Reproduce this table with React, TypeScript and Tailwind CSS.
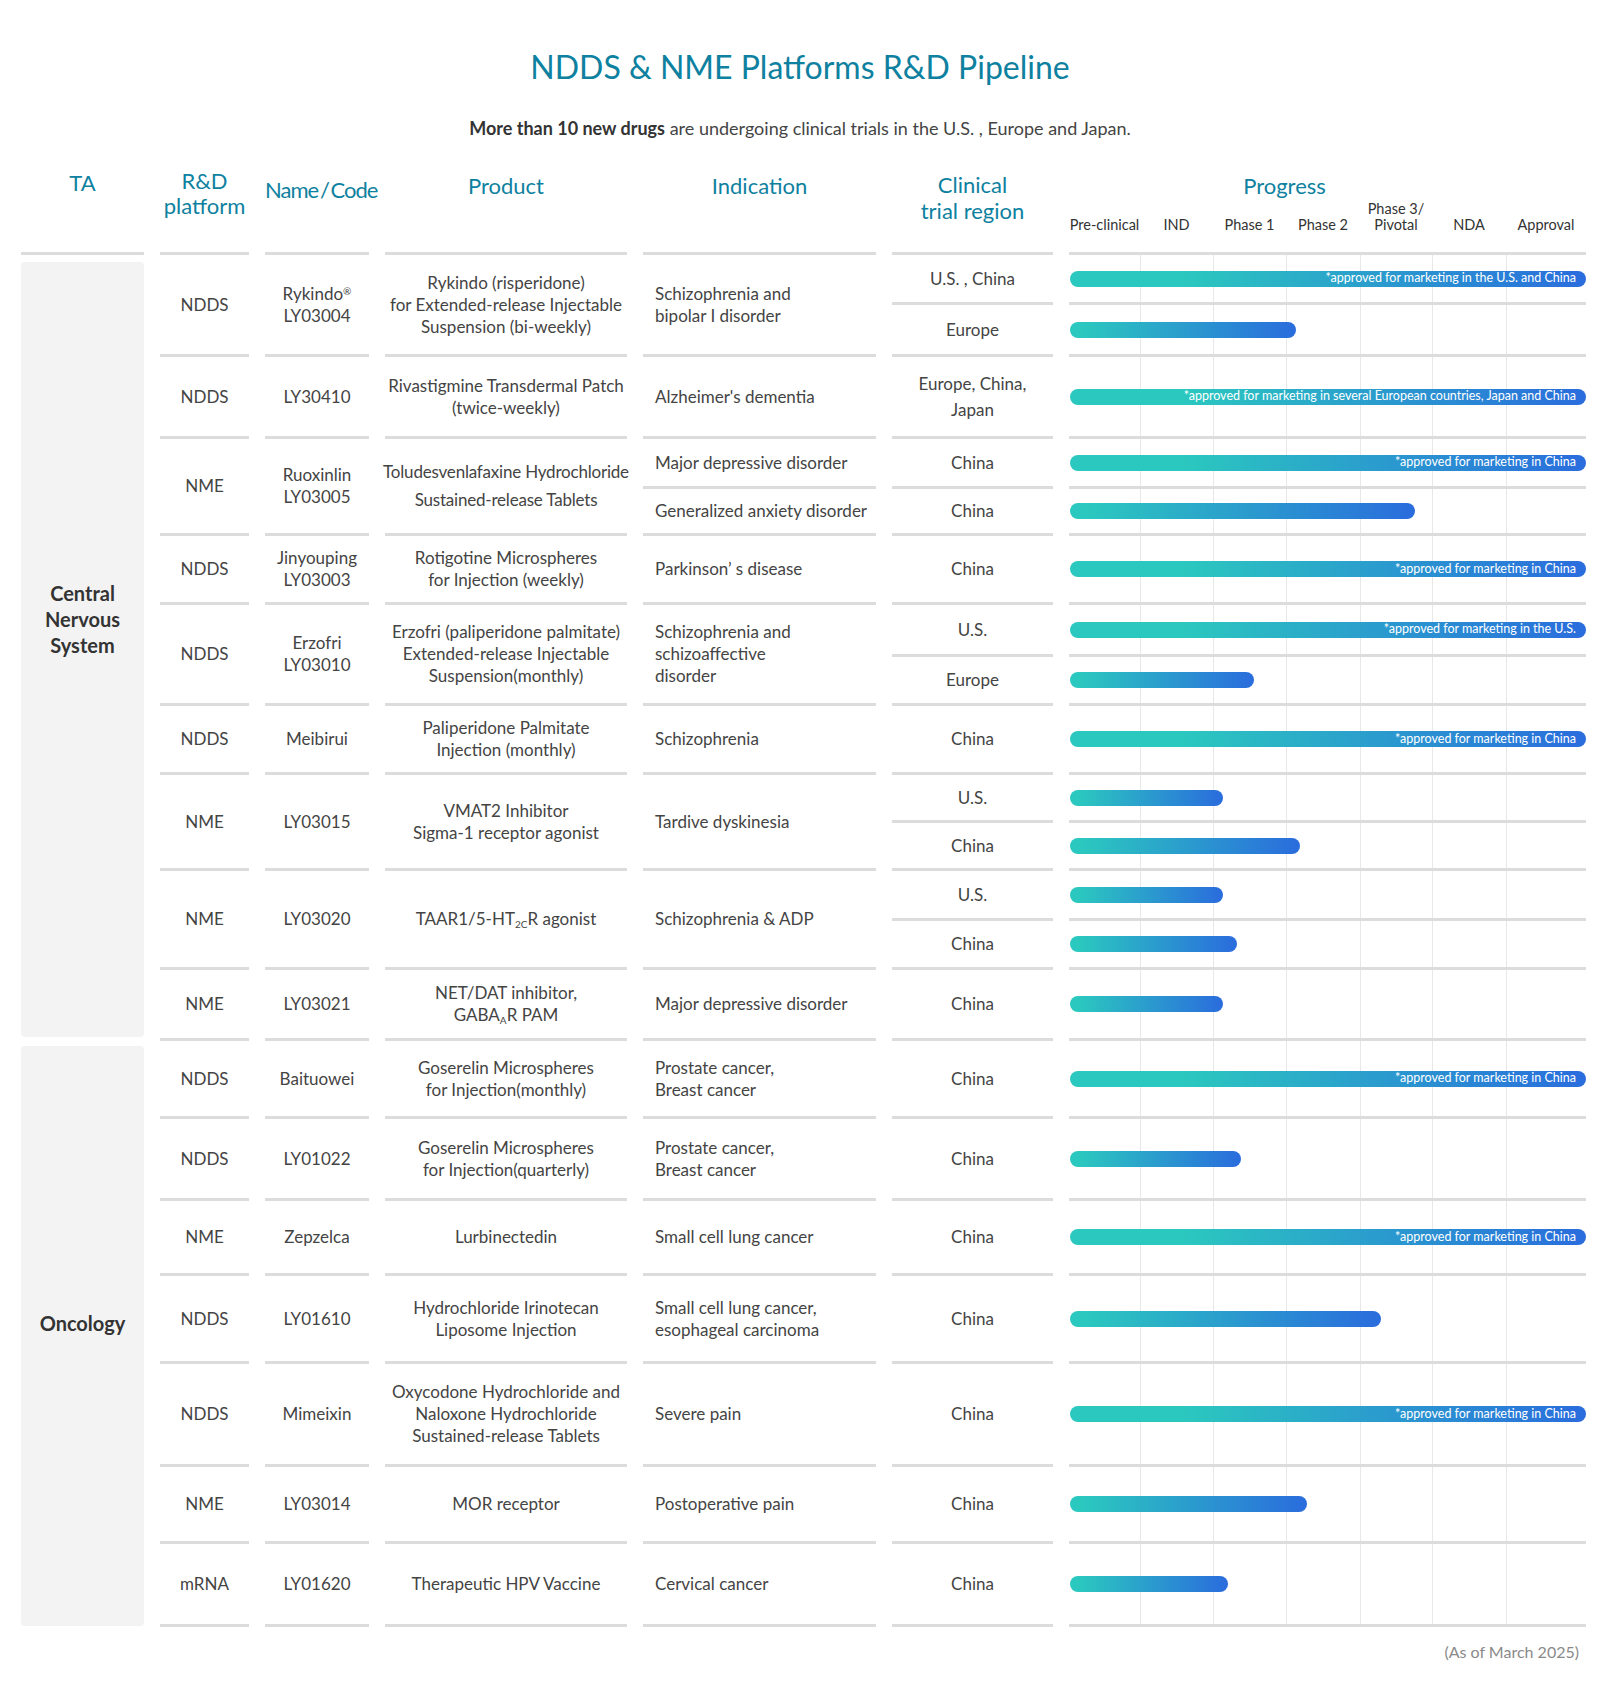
import type {ReactNode} from 'react';

type SubRow = {
  region: ReactNode;
  height: number;
  bar: number;
  label?: string;
  indication?: ReactNode;
};

type Row = {
  platform: string;
  name: ReactNode;
  product: ReactNode;
  productLeading?: string;
  indication?: ReactNode;
  height: number;
  subs: SubRow[];
};

const FULL = 516;
const CHINA = '*approved for marketing in China';

const PHASES: ReactNode[] = [
  'Pre-clinical',
  'IND',
  'Phase 1',
  'Phase 2',
  <>
    Phase 3/
    <br />
    Pivotal
  </>,
  'NDA',
  'Approval',
];

const COL_START = [
  'col-start-1',
  'col-start-2',
  'col-start-3',
  'col-start-4',
  'col-start-5',
  'col-start-6',
  'col-start-7',
];

function lines(...items: string[]) {
  return items.map((item, index) => (
    <span key={index} className="block whitespace-nowrap">
      {item}
    </span>
  ));
}

const cnsRows: Row[] = [
  {
    platform: 'NDDS',
    name: (
      <>
        <span className="block">
          Rykindo<sup className="text-[10px]">®</sup>
        </span>
        <span className="block">LY03004</span>
      </>
    ),
    product: lines(
      'Rykindo (risperidone)',
      'for Extended-release Injectable',
      'Suspension (bi-weekly)',
    ),
    indication: lines('Schizophrenia and', 'bipolar I disorder'),
    height: 102,
    subs: [
      {
        region: 'U.S. , China',
        height: 50,
        bar: FULL,
        label: '*approved for marketing in the U.S. and China',
      },
      {region: 'Europe', height: 52, bar: 226},
    ],
  },
  {
    platform: 'NDDS',
    name: 'LY30410',
    product: lines('Rivastigmine Transdermal Patch', '(twice-weekly)'),
    indication: "Alzheimer's dementia",
    height: 82,
    subs: [
      {
        region: (
          <span className="leading-[26px]">
            {lines('Europe, China,', 'Japan')}
          </span>
        ),
        height: 82,
        bar: FULL,
        label:
          '*approved for marketing in several European countries, Japan and China',
      },
    ],
  },
  {
    platform: 'NME',
    name: lines('Ruoxinlin', 'LY03005'),
    product: lines(
      'Toludesvenlafaxine Hydrochloride',
      'Sustained-release Tablets',
    ),
    productLeading: 'leading-[28px] tracking-[-0.2px]',
    height: 97,
    subs: [
      {
        indication: 'Major depressive disorder',
        region: 'China',
        height: 50,
        bar: FULL,
        label: CHINA,
      },
      {
        indication: 'Generalized anxiety disorder',
        region: 'China',
        height: 47,
        bar: 345,
      },
    ],
  },
  {
    platform: 'NDDS',
    name: lines('Jinyouping', 'LY03003'),
    product: lines('Rotigotine Microspheres', 'for Injection (weekly)'),
    indication: 'Parkinson’ s disease',
    height: 69,
    subs: [{region: 'China', height: 69, bar: FULL, label: CHINA}],
  },
  {
    platform: 'NDDS',
    name: lines('Erzofri', 'LY03010'),
    product: lines(
      'Erzofri (paliperidone palmitate)',
      'Extended-release Injectable',
      'Suspension(monthly)',
    ),
    indication: lines('Schizophrenia and', 'schizoaffective', 'disorder'),
    height: 101,
    subs: [
      {
        region: 'U.S.',
        height: 52,
        bar: FULL,
        label: '*approved for marketing in the U.S.',
      },
      {region: 'Europe', height: 49, bar: 184},
    ],
  },
  {
    platform: 'NDDS',
    name: 'Meibirui',
    product: lines('Paliperidone Palmitate', 'Injection (monthly)'),
    indication: 'Schizophrenia',
    height: 69,
    subs: [{region: 'China', height: 69, bar: FULL, label: CHINA}],
  },
  {
    platform: 'NME',
    name: 'LY03015',
    product: lines('VMAT2 Inhibitor', 'Sigma-1 receptor agonist'),
    indication: 'Tardive dyskinesia',
    height: 96,
    subs: [
      {region: 'U.S.', height: 48, bar: 153},
      {region: 'China', height: 48, bar: 230},
    ],
  },
  {
    platform: 'NME',
    name: 'LY03020',
    product: (
      <>
        TAAR1/5-HT<sub className="text-[10px]">2C</sub>R agonist
      </>
    ),
    indication: 'Schizophrenia & ADP',
    height: 99,
    subs: [
      {region: 'U.S.', height: 50, bar: 153},
      {region: 'China', height: 49, bar: 167},
    ],
  },
  {
    platform: 'NME',
    name: 'LY03021',
    product: (
      <>
        <span className="block">NET/DAT inhibitor,</span>
        <span className="block">
          GABA<sub className="text-[10px]">A</sub>R PAM
        </span>
      </>
    ),
    indication: 'Major depressive disorder',
    height: 71,
    subs: [{region: 'China', height: 71, bar: 153}],
  },
];

const oncologyRows: Row[] = [
  {
    platform: 'NDDS',
    name: 'Baituowei',
    product: lines('Goserelin Microspheres', 'for Injection(monthly)'),
    indication: lines('Prostate cancer,', 'Breast cancer'),
    height: 78,
    subs: [{region: 'China', height: 78, bar: FULL, label: CHINA}],
  },
  {
    platform: 'NDDS',
    name: 'LY01022',
    product: lines('Goserelin Microspheres', 'for Injection(quarterly)'),
    indication: lines('Prostate cancer,', 'Breast cancer'),
    height: 82,
    subs: [{region: 'China', height: 82, bar: 171}],
  },
  {
    platform: 'NME',
    name: 'Zepzelca',
    product: 'Lurbinectedin',
    indication: 'Small cell lung cancer',
    height: 75,
    subs: [{region: 'China', height: 75, bar: FULL, label: CHINA}],
  },
  {
    platform: 'NDDS',
    name: 'LY01610',
    product: lines('Hydrochloride Irinotecan', 'Liposome Injection'),
    indication: lines('Small cell lung cancer,', 'esophageal carcinoma'),
    height: 88,
    subs: [{region: 'China', height: 88, bar: 311}],
  },
  {
    platform: 'NDDS',
    name: 'Mimeixin',
    product: lines(
      'Oxycodone Hydrochloride and',
      'Naloxone Hydrochloride',
      'Sustained-release Tablets',
    ),
    indication: 'Severe pain',
    height: 103,
    subs: [{region: 'China', height: 103, bar: FULL, label: CHINA}],
  },
  {
    platform: 'NME',
    name: 'LY03014',
    product: 'MOR receptor',
    indication: 'Postoperative pain',
    height: 77,
    subs: [{region: 'China', height: 77, bar: 237}],
  },
  {
    platform: 'mRNA',
    name: 'LY01620',
    product: 'Therapeutic HPV Vaccine',
    indication: 'Cervical cancer',
    height: 83,
    subs: [{region: 'China', height: 83, bar: 158}],
  },
];

function Cell({
  width,
  children,
  left = false,
  className = '',
}: {
  width: string;
  children: ReactNode;
  left?: boolean;
  className?: string;
}) {
  return (
    <div
      className={`flex h-full shrink-0 items-center border-b-[3px] border-[#dcdcdc] ${
        left ? 'justify-start pl-[12px] text-left' : 'justify-center text-center'
      } ${width} ${className}`}
    >
      <div>{children}</div>
    </div>
  );
}

function ProgressCell({sub}: {sub: SubRow}) {
  const isFull = sub.bar === FULL;

  return (
    <div className="grid h-full w-[517px] shrink-0 grid-cols-[71px_73px_73px_74px_72px_74px_80px] border-b-[3px] border-[#dcdcdc]">
      {COL_START.map((col, index) => (
        <div
          key={col}
          className={`row-start-1 ${col} ${
            index > 0 ? 'border-l border-[#e8e8e8]' : ''
          }`}
        />
      ))}
      <div
        className={`col-span-7 col-start-1 row-start-1 ml-[1px] flex h-[16px] items-center justify-end self-center justify-self-start rounded-full pr-[10px] text-[12.5px] leading-none whitespace-nowrap text-white ${
          isFull
            ? 'bg-[linear-gradient(90deg,#2bc8bf_22%,#2a6cdd_100%)]'
            : 'bg-[linear-gradient(90deg,#2bc8bf_5%,#2a6cdd_100%)]'
        }`}
        style={{width: sub.bar}}
      >
        {sub.label}
      </div>
    </div>
  );
}

function DataRow({row}: {row: Row}) {
  const splitIndication = row.subs.some(sub => sub.indication);

  return (
    <div className="flex gap-[16px]" style={{height: row.height}}>
      <Cell width="w-[89px]">{row.platform}</Cell>
      <Cell width="w-[104px]">{row.name}</Cell>
      <Cell width="w-[242px]" className={row.productLeading ?? ''}>
        {row.product}
      </Cell>
      {!splitIndication && (
        <Cell width="w-[233px]" left>
          {row.indication}
        </Cell>
      )}
      <div className="flex flex-col">
        {row.subs.map((sub, index) => (
          <div
            key={index}
            className="flex gap-[16px]"
            style={{height: sub.height}}
          >
            {splitIndication && (
              <Cell width="w-[233px]" left>
                {sub.indication}
              </Cell>
            )}
            <Cell width="w-[161px]">{sub.region}</Cell>
            <ProgressCell sub={sub} />
          </div>
        ))}
      </div>
    </div>
  );
}

function HeaderCell({
  width,
  children,
  className = 'pt-[7px]',
}: {
  width: string;
  children: ReactNode;
  className?: string;
}) {
  return (
    <div
      className={`h-full shrink-0 border-b-[3px] border-[#dcdcdc] text-center text-[22px] leading-[25px] text-[#0e81a0] ${width} ${className}`}
    >
      {children}
    </div>
  );
}

export default function App() {
  return (
    <div className="h-[1686px] w-[1600px] bg-white pt-[47px] font-['Lato',sans-serif] text-[#444]">
      <h1 className="text-center text-[32px] leading-[40px] text-[#0e81a0]">
        NDDS &amp; NME Platforms R&amp;D Pipeline
      </h1>
      <p className="mt-[29px] text-center text-[18px] leading-[24px] text-[#444]">
        <span className="font-bold text-[#333]">More than 10 new drugs</span>{' '}
        are undergoing clinical trials in the U.S. , Europe and Japan.
      </p>

      <div className="mt-[25px] ml-[21px] flex w-[1565px] gap-[16px] text-[17px] leading-[22px]">
        <div className="flex w-[123px] shrink-0 flex-col">
          <div className="h-[90px]">
            <HeaderCell width="w-full" className="pt-[5px]">
              TA
            </HeaderCell>
          </div>
          <div className="mt-[7px] flex h-[775px] items-center justify-center rounded-[4px] bg-[#f3f3f3] pb-[62px] text-center text-[20px] leading-[26px] font-bold text-[#333]">
            <div>{lines('Central', 'Nervous', 'System')}</div>
          </div>
          <div className="mt-[9px] flex h-[580px] items-center justify-center rounded-[4px] bg-[#f3f3f3] pb-[26px] text-[20px] font-bold text-[#333]">
            Oncology
          </div>
        </div>

        <div className="flex flex-col">
          <div className="flex h-[90px] gap-[16px]">
            <HeaderCell width="w-[89px]" className="pt-[3px]">
              R&amp;D
              <br />
              platform
            </HeaderCell>
            <HeaderCell
              width="w-[104px]"
              className="pt-[12px] text-[18px] tracking-[-1px] whitespace-nowrap"
            >
              Name{'\u2009'}/{'\u2009'}Code
            </HeaderCell>
            <HeaderCell width="w-[242px]" className="pt-[8px]">
              Product
            </HeaderCell>
            <HeaderCell width="w-[233px]" className="pt-[8px]">
              Indication
            </HeaderCell>
            <HeaderCell width="w-[161px]" className="pt-[7px] leading-[26px]">
              Clinical
              <br />
              trial region
            </HeaderCell>
            <div className="flex h-full w-[517px] shrink-0 flex-col border-b-[3px] border-[#dcdcdc]">
              <div className="pt-[8px] pr-[86px] text-center text-[22px] leading-[25px] text-[#0e81a0]">
                Progress
              </div>
              <div className="mt-auto mb-[19px] grid grid-cols-[71px_73px_73px_74px_72px_74px_80px] items-end text-center text-[14.5px] leading-[16px] text-[#333]">
                {PHASES.map((phase, index) => (
                  <div key={index} className="whitespace-nowrap">
                    {phase}
                  </div>
                ))}
              </div>
            </div>
          </div>

          {cnsRows.map((row, index) => (
            <DataRow key={`cns-${index}`} row={row} />
          ))}
          {oncologyRows.map((row, index) => (
            <DataRow key={`onc-${index}`} row={row} />
          ))}
        </div>
      </div>

      <p className="mt-[15px] w-[1579px] text-right text-[16px] leading-[20px] text-[#8a8a8a]">
        (As of March 2025)
      </p>
    </div>
  );
}
